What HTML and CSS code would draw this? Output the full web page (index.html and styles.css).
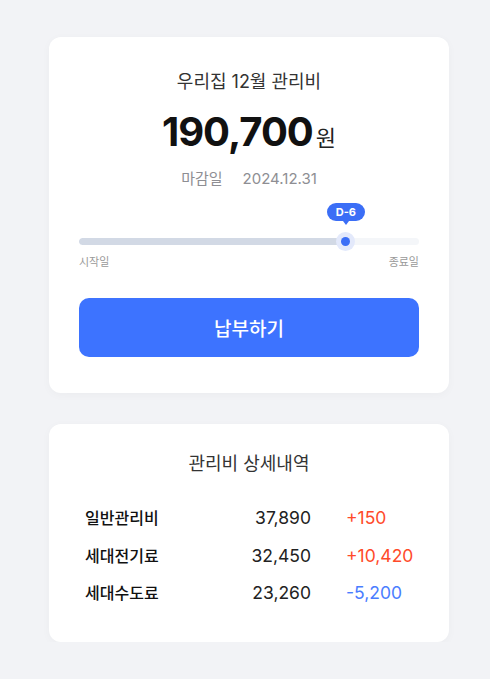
FILE: index.html
```html
<!DOCTYPE html>
<html lang="ko">
<head>
<meta charset="utf-8">
<link rel="stylesheet" href="styles.css">
</head>
<body>
<main class="page">
  <section class="card bill">
    <h1 class="bill-title">우리집 12월 관리비</h1>
    <div class="amount"><span class="amount-num">190,700</span><span class="amount-unit">원</span></div>
    <div class="due"><span class="due-label">마감일</span><span class="due-date">2024.12.31</span></div>
    <div class="slider">
      <div class="track-wrap">
        <div class="track"><div class="track-fill" style="width: 78.5%"></div></div>
        <div class="marker" style="left: 78.5%">
          <div class="tip">D-6</div>
          <div class="thumb"><span class="dot"></span></div>
        </div>
      </div>
      <div class="slider-labels"><span>시작일</span><span>종료일</span></div>
    </div>
    <button class="pay">납부하기</button>
  </section>
  <section class="card detail">
    <h2 class="detail-title">관리비 상세내역</h2>
    <div class="rows">
      <span class="r-label">일반관리비</span><span class="r-value">37,890</span><span class="r-diff up">+150</span>
      <span class="r-label">세대전기료</span><span class="r-value">32,450</span><span class="r-diff up">+10,420</span>
      <span class="r-label">세대수도료</span><span class="r-value">23,260</span><span class="r-diff down">-5,200</span>
    </div>
  </section>
</main>
</body>
</html>
```
FILE: styles.css
```css
* { box-sizing: border-box; }
html, body { margin: 0; padding: 0; }
body {
  background: #f2f3f6;
  font-family: Inter, "Noto Sans CJK KR", sans-serif;
  color: #222;
}
.page {
  width: 400px;
  margin: 0 0 0 49px;
  padding-top: 37px;
  display: flex;
  flex-direction: column;
  gap: 31px;
}
.card {
  background: #fff;
  border-radius: 12px;
  box-shadow: 0 2px 10px rgba(0,0,0,0.03);
}
.bill {
  padding: 33px 30px 36px;
  display: flex;
  flex-direction: column;
  align-items: stretch;
}
.bill-title {
  margin: 0;
  font-size: 18px;
  font-weight: 400;
  line-height: 24px;
  text-align: center;
  color: #333;
}
.amount {
  margin-top: 13px;
  text-align: center;
  line-height: 50px;
  height: 50px;
}
.amount-num {
  font-size: 40px;
  font-weight: 700;
  color: #111;
  letter-spacing: -1px;
}
.amount-unit {
  font-size: 22px;
  font-weight: 400;
  color: #222;
  margin-left: 3px;
}
.due {
  margin-top: 12px;
  display: flex;
  justify-content: center;
  gap: 20px;
  font-size: 15px;
  line-height: 20px;
  color: #8e8e93;
}
.slider {
  margin-top: 14px;
}
.track-wrap {
  position: relative;
  height: 48px;
}
.track {
  position: absolute;
  left: 0; right: 0;
  top: 35px;
  height: 7px;
  border-radius: 4px;
  background: #f4f6f9;
  overflow: hidden;
}
.track-fill {
  height: 100%;
  background: #d2d9e5;
  border-radius: 4px;
}
.marker {
  position: absolute;
  top: 0;
  width: 0;
  display: flex;
  flex-direction: column;
  align-items: center;
}
.tip {
  position: relative;
  flex: none;
  height: 18px;
  padding: 0 9px;
  border-radius: 9px;
  background: #3b6ef6;
  color: #fff;
  font-size: 11px;
  font-weight: 700;
  line-height: 18px;
  white-space: nowrap;
}
.tip::after {
  content: "";
  position: absolute;
  left: 50%;
  bottom: -4px;
  margin-left: -3px;
  border-left: 3px solid transparent;
  border-right: 3px solid transparent;
  border-top: 4px solid #3b6ef6;
}
.thumb {
  flex: none;
  margin-top: 11px;
  width: 19px;
  height: 19px;
  border-radius: 50%;
  background: #e3e9fb;
  display: flex;
  align-items: center;
  justify-content: center;
}
.dot {
  width: 9px;
  height: 9px;
  border-radius: 50%;
  background: #3b6ef6;
}
.slider-labels {
  display: flex;
  justify-content: space-between;
  font-size: 11px;
  line-height: 16px;
  color: #999;
  margin-top: 3px;
}
.pay {
  margin-top: 28px;
  height: 59px;
  border: 0;
  border-radius: 10px;
  background: #3d73ff;
  color: #fff;
  font-family: inherit;
  font-size: 19px;
  font-weight: 500;
}
.detail {
  padding: 28px 36px 37px;
}
.detail-title {
  margin: 0;
  font-size: 18px;
  font-weight: 400;
  line-height: 24px;
  text-align: center;
  color: #333;
}
.rows {
  margin-top: 30px;
  display: grid;
  grid-template-columns: 1fr auto 67px;
  column-gap: 35px;
  row-gap: 13.5px;
  font-size: 17.5px;
  line-height: 24px;
}
.r-label {
  font-size: 16px;
  font-weight: 500;
  color: #111;
}
.r-value {
  text-align: right;
  color: #222;
}
.r-diff.up { color: #ff4a2a; }
.r-diff.down { color: #4a7dff; }
```
